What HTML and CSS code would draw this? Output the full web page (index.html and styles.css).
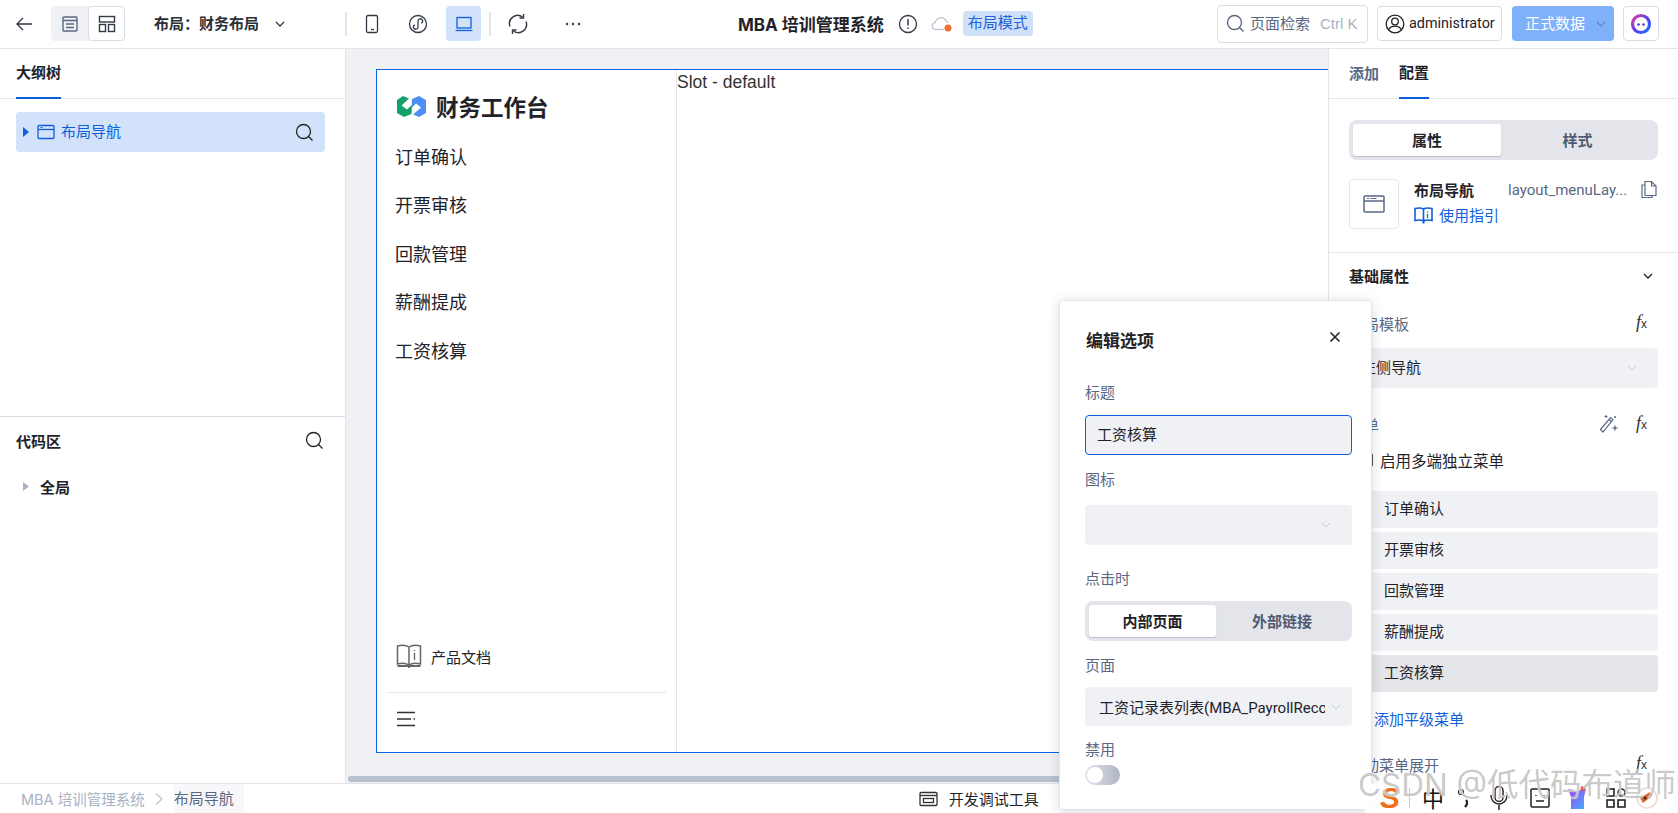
FILE: index.html
```html
<!DOCTYPE html>
<html lang="zh-CN">
<head>
<meta charset="utf-8">
<title>MBA 培训管理系统</title>
<link rel="stylesheet" href="styles.css">
</head>
<body>
<div class="app">
  <header class="topbar">
    <svg class="back" width="20" height="20" viewBox="0 0 20 20"><path d="M18 10H3M9 4l-6 6 6 6" fill="none" stroke="#333a47" stroke-width="1.4"/></svg>
    <div class="view-tabs">
      <span class="view-tab"><svg width="18" height="18" viewBox="0 0 18 18" fill="none" stroke="#5a6884" stroke-width="1.4"><rect x="2" y="2" width="14" height="14" rx="1"/><path d="M2 5.5h14M5 9h8M5 12.500h8"/></svg></span>
      <span class="view-tab on"><svg width="18" height="18" viewBox="0 0 18 18" fill="none" stroke="#333a47" stroke-width="1.4"><rect x="1.500" y="1.500" width="15" height="5.500"/><rect x="1.500" y="9.500" width="6" height="7"/><rect x="10.500" y="9.500" width="6" height="7"/></svg></span>
    </div>
    <span class="layout-name">布局：财务布局</span>
    <svg class="layout-caret" width="14" height="14" viewBox="0 0 14 14"><path d="M3 5l4 4 4-4" fill="none" stroke="#333a47" stroke-width="1.300"/></svg>
    <i class="vline first"></i>
    <span class="dev"><svg width="18" height="20" viewBox="0 0 18 20" fill="none" stroke="#333a47" stroke-width="1.300"><rect x="3.500" y="1.500" width="11" height="17" rx="1.500"/><path d="M8 15.500h3"/></svg></span>
    <span class="dev"><svg width="20" height="20" viewBox="0 0 20 20" fill="none" stroke="#333a47" stroke-width="1.300"><circle cx="10" cy="10" r="8.500"/><path d="M6.800 10.800a2.300 2.300 0 1 0 3.200 2.100V7.100a2.300 2.300 0 1 1 3.200 2.100"/></svg></span>
    <span class="dev sel"><svg width="20" height="18" viewBox="0 0 20 18" fill="none" stroke="#0f5fdc" stroke-width="1.300"><rect x="3" y="2.500" width="14" height="10.500"/><path d="M1.500 15.500h17"/></svg></span>
    <i class="vline"></i>
    <span class="dev refresh"><svg width="22" height="22" viewBox="0 0 22 22" fill="none" stroke="#333a47" stroke-width="1.400"><path d="M3 13.500A8.200 8.200 0 0 1 15.500 4M19 8.500A8.200 8.200 0 0 1 6.500 18"/><path d="M16.500 1v4h-4M5.500 21v-4h4"/></svg></span>
    <span class="dev dots"><svg width="16" height="4" viewBox="0 0 16 4" fill="#333a47"><circle cx="2" cy="2" r="1.200"/><circle cx="8" cy="2" r="1.200"/><circle cx="14" cy="2" r="1.200"/></svg></span>
    <strong class="app-title">MBA 培训管理系统</strong>
    <svg class="alert" width="20" height="20" viewBox="0 0 20 20" fill="none" stroke="#333a47" stroke-width="1.300"><circle cx="10" cy="10" r="8.500"/><path d="M10 5v6.500M10 13.500v1.500" stroke-width="1.500"/></svg>
    <svg class="cloud" width="22" height="18" viewBox="0 0 22 18"><path d="M5 14.500a3.500 3.500 0 0 1-.5-7 5.500 5.500 0 0 1 10.500-1.500 4 4 0 0 1 2 2" fill="none" stroke="#b7bfcc" stroke-width="1.200"/><path d="M5 14.500h8" stroke="#b7bfcc" stroke-width="1.200"/><circle cx="17" cy="13" r="3.500" fill="#ee6f2d"/></svg>
    <span class="badge">布局模式</span>
    <div class="search-box"><svg width="19" height="19" viewBox="0 0 19 19" fill="none" stroke="#5a6884" stroke-width="1.400"><circle cx="8.500" cy="8.500" r="7"/><path d="M13.500 13.500l4 4"/></svg><span class="search-text">页面检索</span><span class="search-key">Ctrl K</span></div>
    <div class="user-box"><svg width="20" height="20" viewBox="0 0 20 20" fill="none" stroke="#222" stroke-width="1.300"><circle cx="10" cy="10" r="8.800"/><circle cx="10" cy="7.500" r="3.300"/><path d="M3.500 16c1.500-3 4-3.800 6.500-3.800s5 .8 6.500 3.800"/></svg><span>administrator</span></div>
    <div class="data-btn"><span>正式数据</span><svg width="12" height="12" viewBox="0 0 12 12"><path d="M2 4l4 4 4-4" fill="none" stroke="#5d86c9" stroke-width="1.200"/></svg></div>
    <div class="bot-btn"><svg width="22" height="22" viewBox="0 0 22 22"><defs><linearGradient id="botg" x1="0" y1="0" x2="1" y2="1"><stop offset="0" stop-color="#e0409a"/><stop offset=".5" stop-color="#5a3df0"/><stop offset="1" stop-color="#1e6bff"/></linearGradient></defs><circle cx="11" cy="11" r="8.500" fill="#fff" stroke="url(#botg)" stroke-width="3.200"/><circle cx="8.500" cy="11.500" r="1.300" fill="#3a3ad0"/><circle cx="13.500" cy="11.500" r="1.300" fill="#3a3ad0"/></svg></div>
  </header>

  <div class="main">
    <aside class="left">
      <div class="tabbar"><span class="tab active">大纲树</span></div>
      <div class="outline">
        <div class="tree-row">
          <svg class="tree-caret" width="8" height="10" viewBox="0 0 8 10"><path d="M1 0l6 5-6 5z" fill="#0f5fdc"/></svg>
          <svg class="tree-ico" width="18" height="16" viewBox="0 0 18 16" fill="none" stroke="#0f5fdc" stroke-width="1.300"><rect x="1" y="1.500" width="16" height="13" rx="1"/><path d="M1 5.500h16"/><path d="M3.500 3.500h2" stroke-width="1"/></svg>
          <span class="tree-text">布局导航</span>
          <svg class="tree-search" width="19" height="19" viewBox="0 0 19 19" fill="none" stroke="#222" stroke-width="1.300"><circle cx="8.500" cy="8.500" r="7"/><path d="M13.500 13.500l4 4"/></svg>
        </div>
      </div>
      <div class="code">
        <div class="code-head"><strong>代码区</strong><svg width="19" height="19" viewBox="0 0 19 19" fill="none" stroke="#222" stroke-width="1.300"><circle cx="8.500" cy="8.500" r="7"/><path d="M13.500 13.500l4 4"/></svg></div>
        <div class="code-row"><svg width="7" height="9" viewBox="0 0 7 9"><path d="M0 0l6 4.500-6 4.500z" fill="#a8b2c4"/></svg><strong>全局</strong></div>
      </div>
    </aside>

    <section class="canvas">
      <div class="frame">
        <nav class="side">
          <div class="brand">
            <svg width="29" height="21" viewBox="0 0 29 21"><path d="M6 0l6 2.500-7.500 7 5.500 4 5-4.500-.5 9L7 21l-7-4V4z" fill="#12a06b"/><path d="M22 0l7 4v13l-7 4-6-2.500 8-7-5-4-4.500 4.500.5-9z" fill="#4d8ff5"/></svg>
            <span>财务工作台</span>
          </div>
          <div class="side-menu">
            <a>订单确认</a><a>开票审核</a><a>回款管理</a><a>薪酬提成</a><a>工资核算</a>
          </div>
          <div class="side-doc">
            <svg width="26" height="26" viewBox="0 0 26 26" fill="none" stroke="#666" stroke-width="1.500"><path d="M13 4C10 2 5 2 1.500 3v18c3.500-1 8.500-1 11.500 1 3-2 8-2 11.500-1V3C21 2 16 2 13 4zM13 4v18"/><path d="M18.500 7v1M18.500 10v7" stroke-width="1.300"/><path d="M1.500 23h23M13 23v2" stroke-width="1.800"/></svg>
            <span>产品文档</span>
          </div>
          <div class="side-foot"><svg width="18" height="16" viewBox="0 0 18 16" stroke="#333" stroke-width="1.600"><path d="M0 1.500h18M0 8h14M0 14.500h18"/><path d="M16.500 8h1.500"/></svg></div>
        </nav>
        <div class="slot">Slot - default</div>
      </div>
      <div class="hscroll"></div>
    </section>

    <aside class="right">
      <div class="tabbar r"><span class="tab muted">添加</span><span class="tab active">配置</span></div>
      <div class="seg big"><span class="seg-item on">属性</span><span class="seg-item">样式</span></div>
      <div class="comp">
        <div class="comp-ico"><svg width="22" height="18" viewBox="0 0 22 18" fill="none" stroke="#5a6884" stroke-width="1.500"><rect x="1" y="1" width="20" height="16" rx="1"/><path d="M1 6h20"/><path d="M4 3.500h2M7.500 3.500h6" stroke-width="1"/></svg></div>
        <div class="comp-info">
          <div class="comp-line"><strong>布局导航</strong><span class="comp-id">layout_menuLay...</span><svg width="18" height="19" viewBox="0 0 18 19" fill="none" stroke="#5a6884" stroke-width="1.200"><path d="M5 1.500h6.500l4.500 4.500v9.500H5zM11.500 1.500V6H16"/><path d="M5 5H2v12.500h10v-2"/></svg></div>
          <div class="comp-guide"><svg width="19" height="18" viewBox="0 0 19 18" fill="none" stroke="#0f5fdc" stroke-width="1.600"><path d="M9.500 3C7.500 1.800 4 1.800 1 2.500v12c3-.7 6.500-.7 8.500.5 2-1.200 5.500-1.200 8.500-.5v-12C15 1.800 11.500 1.800 9.500 3zM9.500 3v12"/><path d="M13.500 5.500v1M13.500 8v4" stroke-width="1.300"/><path d="M9.500 15v2.500" stroke-width="2"/></svg><span>使用指引</span></div>
        </div>
      </div>
      <div class="group-head"><strong>基础属性</strong><svg width="14" height="14" viewBox="0 0 14 14"><path d="M3 5l4 4 4-4" fill="none" stroke="#222" stroke-width="1.300"/></svg></div>
      <div class="prop-label first"><span>布局模板</span><em class="fx">f<small>x</small></em></div>
      <div class="prop-select"><span>左侧导航</span><svg width="12" height="12" viewBox="0 0 12 12"><path d="M2 4l4 4 4-4" fill="none" stroke="#c5cad4" stroke-width="1"/></svg></div>
      <div class="prop-label menu"><span>菜单</span><svg class="wand" width="20" height="20" viewBox="0 0 20 20" fill="none" stroke="#5a6884" stroke-width="1.200"><path d="M1.500 15.500L11.500 3.500l2.500 2L4 18z"/><path d="M10 5.500l2.500 2"/><path d="M16 10.500l.8 2.700 2.700.8-2.700.8-.8 2.700-.8-2.700-2.700-.8 2.700-.8z" fill="#5a6884" stroke="none"/><path d="M7 1v3M5.500 2.500h3M16 2v2M15 3h2" stroke-width="1"/></svg><em class="fx">f<small>x</small></em></div>
      <label class="multi"><i class="check"></i><span>启用多端独立菜单</span></label>
      <div class="items">
        <div class="item">订单确认</div>
        <div class="item">开票审核</div>
        <div class="item">回款管理</div>
        <div class="item">薪酬提成</div>
        <div class="item cur">工资核算</div>
      </div>
      <div class="add-item"><span class="plus">+</span><span>添加平级菜单</span></div>
      <div class="prop-label last"><span>自动菜单展开</span><em class="fx">f<small>x</small></em></div>
    </aside>
  </div>

  <footer class="status">
    <span class="crumb">MBA 培训管理系统</span>
    <svg class="crumb-sep" width="10" height="14" viewBox="0 0 10 14"><path d="M2 1.500L8 7l-6 5.500" fill="none" stroke="#b7bfcc" stroke-width="1.100"/></svg>
    <span class="crumb-cur">布局导航</span>
    <div class="devtool"><svg width="19" height="16" viewBox="0 0 19 16" fill="none" stroke="#333" stroke-width="1.300"><rect x="1" y="1.500" width="17" height="13" rx="1"/><path d="M1 4.500h17"/><rect x="4.500" y="7.500" width="10" height="4"/></svg><span>开发调试工具</span></div>
  </footer>

  <div class="popover">
    <div class="pop-head"><strong>编辑选项</strong><svg width="14" height="14" viewBox="0 0 14 14"><path d="M2.500 2.500l9 9M11.500 2.500l-9 9" stroke="#222" stroke-width="1.600"/></svg></div>
    <div class="pop-label">标题</div>
    <div class="pop-input">工资核算</div>
    <div class="pop-label icon">图标</div>
    <div class="pop-select empty"><svg width="12" height="12" viewBox="0 0 12 12"><path d="M2 4l4 4 4-4" fill="none" stroke="#c5cad4" stroke-width="1"/></svg></div>
    <div class="pop-label click">点击时</div>
    <div class="seg small"><span class="seg-item on">内部页面</span><span class="seg-item">外部链接</span></div>
    <div class="pop-label page">页面</div>
    <div class="pop-select page"><span>工资记录表列表(MBA_PayrollRecord)</span><svg width="12" height="12" viewBox="0 0 12 12"><path d="M2 4l4 4 4-4" fill="none" stroke="#c5cad4" stroke-width="1"/></svg></div>
    <div class="pop-label dis">禁用</div>
    <div class="switch"><i></i></div>
  </div>

  <div class="ime">
    <span class="ime-s">S</span>
    <i class="ime-sep"></i>
    <span class="ime-zh">中</span>
    <svg class="ime-punc" width="14" height="22" viewBox="0 0 14 22"><circle cx="4" cy="5" r="2.500" fill="none" stroke="#222" stroke-width="1.200"/><path d="M9 13c2 2 1 5-1 7" fill="none" stroke="#222" stroke-width="2.400"/></svg>
    <svg class="ime-mic" width="20" height="26" viewBox="0 0 20 26" fill="none" stroke="#222" stroke-width="1.500"><rect x="6" y="1.500" width="8" height="15" rx="4"/><path d="M2 10c0 12 16 12 16 0M10 20v5"/></svg>
    <svg class="ime-face" width="20" height="20" viewBox="0 0 20 20" fill="none" stroke="#222" stroke-width="1.500"><rect x="1" y="1" width="18" height="18" rx="1"/><path d="M6 7v1M14 7v1M6 13h8"/></svg>
    <svg class="ime-shirt" width="20" height="24" viewBox="0 0 20 24"><defs><linearGradient id="shg" x1="0" y1="0" x2="1" y2="1"><stop offset="0" stop-color="#a23df0"/><stop offset="1" stop-color="#3fb4ff"/></linearGradient></defs><path d="M1 3l5 1c2 2 5 2 7 0l6-1-2 8v12H4V11z" fill="url(#shg)"/><circle cx="16" cy="2.500" r="2.500" fill="#ee4d3d"/></svg>
    <svg class="ime-grid" width="20" height="20" viewBox="0 0 20 20" fill="none" stroke="#222" stroke-width="1.600"><rect x="1" y="1" width="7" height="7"/><rect x="12" y="1" width="7" height="7" rx="3.500"/><rect x="1" y="12" width="7" height="7"/><rect x="12" y="12" width="7" height="7"/></svg>
    <svg class="ime-last" width="22" height="22" viewBox="0 0 22 22"><circle cx="11" cy="11" r="10" fill="#fff" stroke="#f2d8cf" stroke-width="1.500"/><path d="M4 11l10-6 2 4-9 7z" fill="#e3672b"/><circle cx="9" cy="11" r="1.500" fill="#333"/></svg>
  </div>
  <div class="watermark">CSDN @低代码布道师</div>
</div>
</body>
</html>
```

FILE: styles.css
```css
* { box-sizing: border-box; }
html, body { margin: 0; height: 100%; overflow: hidden; background: #fff; }
body { font-family: Inter, "Noto Sans CJK SC", "Liberation Sans", sans-serif; font-size: 15px; color: #1f2329; }
svg { display: block; flex: none; }
em { font-style: normal; }
.app { position: relative; display: flex; flex-direction: column; width: 1678px; height: 813px; overflow: hidden; }

.topbar { display: flex; align-items: center; height: 49px; flex: none; padding-bottom: 1px; border-bottom: 1px solid #e3e5eb; }
.back { margin-left: 14px; }
.view-tabs { display: flex; margin-left: 17px; width: 74px; height: 35px; background: #f0f1f5; border-radius: 4px; }
.view-tab { display: flex; align-items: center; justify-content: center; width: 37px; height: 35px; border-radius: 4px; }
.view-tab.on { background: #fff; border: 1px solid #d8dce4; }
.layout-name { margin: -2px 0 0 29px; font-weight: 600; width: 105px; white-space: nowrap; color: #2b2f36; }
.layout-caret { margin-left: 14px; }
.vline { width: 2px; height: 24px; background: #e3e5eb; margin-left: 8px; }
.vline.first { margin-left: 58px; }
.dev { display: flex; align-items: center; justify-content: center; width: 35px; height: 35px; margin-left: 11px; border-radius: 4px; }
.vline.first + .dev { margin-left: 7px; }
.dev.sel { background: #d2e2fa; }
.dev.refresh { margin-left: 9px; }
.dev.dots { margin-left: 20px; }
.app-title { margin-left: 148px; font-size: 17px; font-weight: 700; white-space: nowrap; color: #1f2329; }
.alert { margin-left: 14px; }
.cloud { margin-left: 13px; }
.badge { margin-left: 10px; width: 70px; height: 25px; line-height: 23px; text-align: center; background: #cfe0f9; color: #1d63dc; border-radius: 4px; font-size: 15px; }
.search-box { display: flex; align-items: center; margin-left: auto; width: 151px; height: 38px; padding-left: 8px; border: 1px solid #d8dce4; border-radius: 4px; }
.search-text { margin: -2px 0 0 5px; color: #5a6884; white-space: nowrap; }
.search-key { margin-left: 10px; color: #a8b2c4; white-space: nowrap; font-family: "Liberation Sans", sans-serif; }
.user-box { display: flex; align-items: center; margin-left: 9px; width: 125px; height: 35px; padding-left: 7px; border: 1px solid #d8dce4; border-radius: 4px; font-family: Roboto, sans-serif; font-size: 14.400px; }
.user-box span { margin-left: 4px; }
.data-btn { display: flex; align-items: center; margin-left: 10px; width: 102px; height: 35px; padding-left: 13px; background: #7fb0fa; border-radius: 4px; color: #fff; }
.data-btn span { margin-top: -2px; }
.data-btn svg { margin-left: 10px; }
.bot-btn { display: flex; align-items: center; justify-content: center; margin: 0 19px 0 9px; width: 36px; height: 35px; border: 1px solid #d8dce4; border-radius: 4px; }

.main { display: flex; flex: 1; min-height: 0; }
.left { display: flex; flex-direction: column; flex: none; width: 346px; border-right: 1px solid #e3e5eb; }
.tabbar { display: flex; flex: none; height: 50px; padding-left: 16px; border-bottom: 1px solid #e3e5eb; }
.tab { display: flex; align-items: center; height: 50px; padding-bottom: 3px; font-weight: 600; }
.tab.active { border-bottom: 2px solid #0f5fdc; color: #1f2329; }
.tab.muted { color: #5a6884; margin-right: 20px; }
.outline { flex: none; height: 318px; padding: 13px 20px 0 16px; border-bottom: 1px solid #d8dce4; }
.tree-row { display: flex; align-items: center; height: 40px; padding-left: 6px; background: #d2e2fa; border-radius: 4px; }
.tree-ico { margin-left: 7px; }
.tree-text { margin-left: 6px; margin-top: -3px; color: #0f5fdc; }
.tree-search { margin-left: auto; margin-right: 11px; }
.code { flex: 1; }
.code-head { display: flex; align-items: center; justify-content: space-between; height: 47px; padding: 0 21px 0 16px; }
.code-head strong, .code-row strong { font-weight: 600; }
.code-row { display: flex; align-items: center; height: 40px; margin-top: 2px; padding-left: 23px; }
.code-row strong { margin-left: 10px; }

.canvas { position: relative; flex: 1; min-width: 0; overflow: hidden; background: #f0f1f5; padding: 20px 0 0 30px; }
.frame { display: flex; width: 1100px; height: 684px; background: #fff; border: 1.500px solid #0f66ec; }
.side { display: flex; flex-direction: column; flex: none; width: 300px; height: 100%; border-right: 1px solid #e3e5eb; }
.brand { display: flex; align-items: center; margin: 21px 0 0 20px; font-size: 22.500px; font-weight: 700; color: #1f2329; }
.brand span { margin-left: 10px; margin-top: -1px; }
.side-menu { margin: 12px 0 0 18px; font-size: 18px; }
.side-menu a { display: block; height: 48.400px; line-height: 48px; }
.side-doc { display: flex; align-items: center; margin: auto 0 0 19px; font-size: 15px; }
.side-doc span { margin-left: 9px; }
.side-foot { margin: 23px 10px 0; height: 60px; border-top: 1px solid #e3e5eb; padding: 18px 0 0 10px; }
.slot { font-family: "Liberation Sans", sans-serif; font-size: 17.500px; line-height: 24px; color: #333; white-space: nowrap; }
.hscroll { position: absolute; left: 2px; bottom: 1px; width: 1100px; height: 6px; border-radius: 3px; background: #b8c1ce; }

.right { flex: none; width: 350px; overflow: hidden; border-left: 1px solid #e3e5eb; }
.tabbar.r { padding-left: 20px; }
.seg { display: flex; padding: 4px; background: #e3e5eb; border-radius: 8px; }
.seg.big { margin: 21px 20px 0 20px; height: 40px; }
.seg-item { flex: 1; display: flex; align-items: center; justify-content: center; padding-bottom: 2px; font-weight: 600; color: #4f5b70; border-radius: 3px; }
.seg-item.on { background: #fff; color: #1f2329; box-shadow: 0 1px 1px #b9bfca; }
.seg.big .seg-item.on { flex: none; width: 148px; }
.seg.small .seg-item.on { flex: none; width: 127px; }
.comp { display: flex; margin: 19px 20px 0; }
.comp-ico { display: flex; align-items: center; justify-content: center; width: 50px; height: 50px; border: 1px solid #e3e5eb; border-radius: 4px; }
.comp-info { flex: 1; margin-left: 15px; }
.comp-line { display: flex; align-items: center; height: 21px; }
.comp-line strong { font-weight: 600; }
.comp-id { margin-left: 34px; width: 119px; color: #5a6884; white-space: nowrap; font-family: Roboto, sans-serif; }
.comp-line svg { margin-left: 13px; }
.comp-guide { display: flex; align-items: center; margin-top: 4px; color: #0f5fdc; }
.comp-guide span { margin-left: 6px; }
.group-head { display: flex; align-items: center; justify-content: space-between; height: 49px; margin-top: 23px; padding: 0 23px 3px 20px; border-top: 1px solid #e3e5eb; }
.group-head strong { font-weight: 600; }
.prop-label { display: flex; align-items: center; height: 24px; padding: 0 24px 0 20px; color: #5a6884; }
.prop-label.first { margin-top: 10px; }
.prop-label.menu { margin-top: 24px; }
.prop-label.last { margin-top: 23px; }
.prop-label > span { flex: 1; }
.fx { width: 18px; font-family: "Liberation Serif", serif; font-style: italic; color: #333; font-size: 18px; line-height: 20px; white-space: nowrap; }
.fx small { font-family: "Liberation Sans", sans-serif; font-style: normal; font-size: 12px; }
.wand { margin-right: 17px; }
.prop-select { display: flex; align-items: center; justify-content: space-between; margin: 13px 20px 0; height: 40px; padding: 0 20px 3px 12px; background: #f0f1f5; border-radius: 4px; color: #1f2329; }
.prop-select svg { margin-top: 3px; }
.multi { display: flex; align-items: center; height: 22px; margin: 13px 0 0 30px; }
.check { width: 14px; height: 14px; border: 1px solid #555; border-radius: 2px; background: #fff; }
.multi span { margin-left: 7px; font-size: 15.500px; margin-top: -1px; }
.items { margin: 20px 20px 0; }
.item { height: 37px; line-height: 35px; margin-bottom: 4px; padding-left: 35px; background: #f0f1f5; border-radius: 4px; }
.item.cur { background: #e4e5e9; }
.add-item { display: flex; align-items: center; margin: 16px 0 0 22px; color: #0f5fdc; }
.plus { width: 20px; margin-left: 3px; }

.status { display: flex; align-items: center; flex: none; height: 30px; padding-left: 21px; border-top: 1px solid #e3e5eb; background: #fff; font-size: 14.500px; }
.crumb { color: #a8b2c4; white-space: nowrap; }
.crumb-sep { margin-left: 9px; }
.crumb-cur { margin-left: 10px; padding-right: 10px; height: 100%; line-height: 29px; background: #f8f8fa; color: #5a6884; font-size: 15px; }
.devtool { display: flex; align-items: center; margin-left: 675px; }
.devtool span { margin-left: 11px; font-size: 15px; }

.popover { position: absolute; left: 1059px; top: 300px; width: 313px; height: 510px; padding: 0 19px 0 25px; background: #fff; border: 1px solid #e3e5eb; border-radius: 4px; box-shadow: 0 2px 12px rgba(40,50,80,.18); }
.pop-head { display: flex; align-items: center; justify-content: space-between; padding-top: 26px; }
.pop-head strong { font-size: 17px; font-weight: 700; margin-left: 1px; }
.pop-head svg { margin-right: 10px; margin-top: -6px; }
.pop-label { height: 22px; line-height: 22px; margin-top: 30px; color: #5a6884; }
.pop-label.icon { margin-top: 14px; }
.pop-label.click { margin-top: 23px; }
.pop-label.page { margin-top: 14px; }
.pop-label.dis { margin-top: 13px; }
.pop-input { height: 40px; line-height: 38px; margin-top: 11px; padding-left: 11px; background: #f0f1f5; border: 1.500px solid #0f5fdc; border-radius: 4px; }
.pop-select { display: flex; align-items: center; justify-content: flex-end; height: 40px; margin-top: 14px; padding-right: 20px; background: #f0f1f5; border-radius: 4px; }
.pop-select.page { height: 39px; margin-top: 10px; padding: 0 10px 0 14px; font-family: Roboto, "Noto Sans CJK SC", sans-serif; }
.pop-select.page span { flex: 1; min-width: 0; overflow: hidden; white-space: nowrap; margin-right: 5px; }
.seg.small { margin-top: 11px; height: 40px; }
.switch { position: relative; width: 35px; height: 20px; margin-top: 4px; border-radius: 10px; background: linear-gradient(90deg, #e3e5eb, #aeb5c3); }
.switch i { position: absolute; left: 2px; top: 2px; width: 16px; height: 16px; border-radius: 50%; background: #fff; }

.ime { position: absolute; right: 0; bottom: 0; display: flex; align-items: center; width: 313px; height: 30px; background: rgba(255,255,255,.9); border-radius: 10px 0 0 0; }
.ime-s { margin-left: 15px; font-size: 30px; line-height: 30px; font-weight: 900; font-style: italic; color: #f0701d; font-family: "Liberation Sans", sans-serif; }
.ime-sep { width: 1px; height: 20px; margin-left: 9px; background: #ccc; }
.ime-zh { margin: -2px 0 0 12px; font-size: 22px; color: #111; }
.ime-punc { margin-left: 13px; }
.ime-mic { margin-left: 18px; }
.ime-face { margin-left: 21px; }
.ime-shirt { margin-left: 17px; }
.ime-grid { margin-left: 19px; }
.ime-last { margin-left: 10px; }
.watermark { position: absolute; left: 1358px; top: 767px; font-size: 31.500px; line-height: 36px; white-space: nowrap; color: rgba(125,125,125,.42); text-shadow: 0 0 1px #fff; pointer-events: none; }
```
